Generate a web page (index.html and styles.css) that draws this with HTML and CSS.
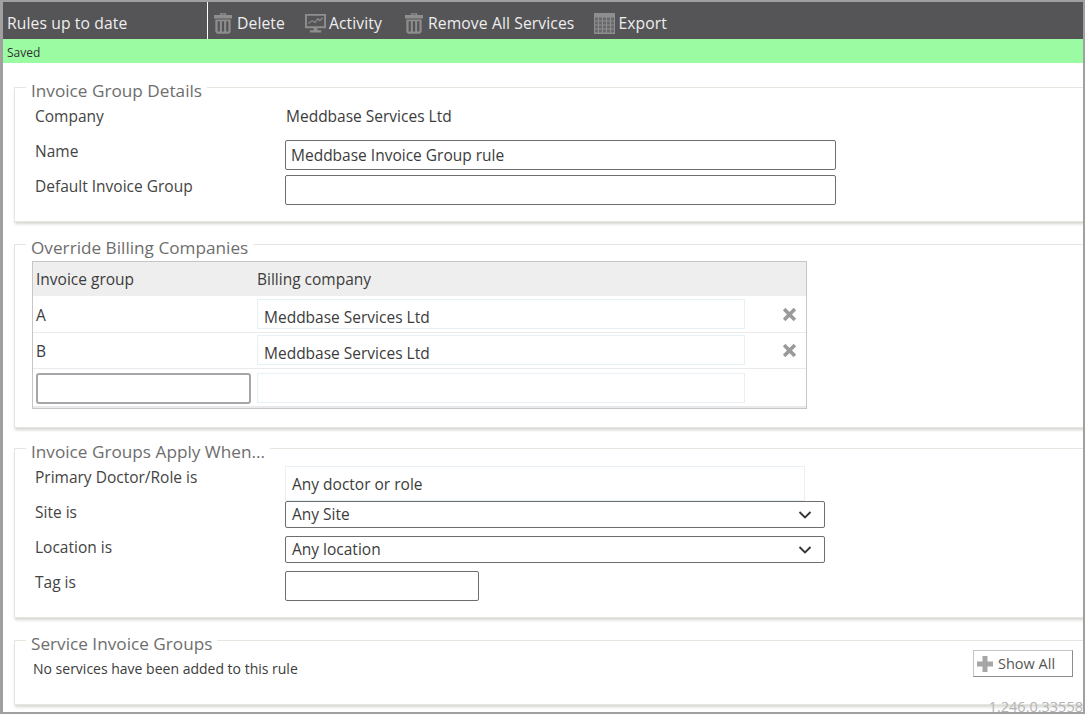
FILE: index.html
```html
<!DOCTYPE html>
<html lang="en">
<head>
<meta charset="utf-8">
<title>Invoice Group rule</title>
<link rel="stylesheet" href="styles.css">
</head>
<body>
<div class="frame">
  <div class="toolbar">
    <div class="status">Rules up to date</div>
    <div class="tool first">
      <svg class="icon" viewBox="0 0 20 23"><path class="solid" fill-rule="evenodd" d="M6.500 0h7v2H20v4H0V2h6.500zM8 1.500V2h4v-.5z"/><path class="solid" fill-rule="evenodd" d="M1.500 7h17v14l-2 2h-13l-2-2zM4 9v11.500h2.500V9zM8.750 9v11.500h2.500V9zM13.500 9v11.500H16V9z"/></svg>
      <span>Delete</span>
    </div>
    <div class="tool activity">
      <svg class="icon wide" viewBox="0 0 22 22"><path class="solid" fill-rule="evenodd" d="M0 1h22v15H13v2h4v2.500H5V18h4v-2H0zM2 3v11h18V3z"/><path class="line" d="M3.500 11l4-3 3 2 3-4 2 2 3-3"/></svg>
      <span>Activity</span>
    </div>
    <div class="tool remove-all">
      <svg class="icon" viewBox="0 0 20 23"><path class="solid" fill-rule="evenodd" d="M6.500 0h7v2H20v4H0V2h6.500zM8 1.500V2h4v-.5z"/><path class="solid" fill-rule="evenodd" d="M1.500 7h17v14l-2 2h-13l-2-2zM4 9v11.500h2.500V9zM8.750 9v11.500h2.500V9zM13.500 9v11.500H16V9z"/></svg>
      <span>Remove All Services</span>
    </div>
    <div class="tool export">
      <svg class="icon wide" viewBox="0 0 21 21"><rect class="solid" width="21" height="21"/><path class="gridcells" d="M0 6h21M0 10h21M0 14h21M0 18h21"/></svg>
      <span>Export</span>
    </div>
  </div>
  <div class="saved">Saved</div>

  <main class="content">
    <fieldset class="group details">
      <legend>Invoice Group Details</legend>
      <div class="form-row company"><label>Company</label><div class="value">Meddbase Services Ltd</div></div>
      <div class="form-row"><label>Name</label><input class="field long" type="text" value="Meddbase Invoice Group rule"></div>
      <div class="form-row"><label>Default Invoice Group</label><input class="field long" type="text"></div>
    </fieldset>

    <fieldset class="group override">
      <legend>Override Billing Companies</legend>
      <div class="table">
        <div class="t-row head"><div class="c-group">Invoice group</div><div class="c-bill">Billing company</div></div>
        <div class="t-row row-a">
          <div class="c-group cell-text">A</div>
          <div class="c-bill"><div class="lookup">Meddbase Services Ltd</div></div>
          <svg class="remove" viewBox="0 0 12 12"><path d="M1 1l10 10M11 1L1 11"/></svg>
        </div>
        <div class="t-row row-b">
          <div class="c-group cell-text">B</div>
          <div class="c-bill"><div class="lookup">Meddbase Services Ltd</div></div>
          <svg class="remove" viewBox="0 0 12 12"><path d="M1 1l10 10M11 1L1 11"/></svg>
        </div>
        <div class="t-row last">
          <div class="c-group"><input class="new-group" type="text"></div>
          <div class="c-bill"><div class="lookup empty"></div></div>
        </div>
      </div>
    </fieldset>

    <fieldset class="group apply">
      <legend>Invoice Groups Apply When...</legend>
      <div class="form-row tight"><label>Primary Doctor/Role is</label><div class="lookup doctor">Any doctor or role</div></div>
      <div class="form-row select-row"><label>Site is</label>
        <div class="select"><span>Any Site</span><svg viewBox="0 0 14 8"><path d="M1.500 1l5.500 5.500L12.500 1"/></svg></div>
      </div>
      <div class="form-row select-row"><label>Location is</label>
        <div class="select"><span>Any location</span><svg viewBox="0 0 14 8"><path d="M1.500 1l5.500 5.500L12.500 1"/></svg></div>
      </div>
      <div class="form-row tag-row"><label>Tag is</label><input class="field short" type="text"></div>
    </fieldset>

    <fieldset class="group services">
      <legend>Service Invoice Groups</legend>
      <div class="services-body">
        <p>No services have been added to this rule</p>
        <button class="show-all" type="button">
          <svg viewBox="0 0 16 16"><path d="M5.500 0h5v5.500H16v5h-5.500V16h-5v-5.500H0v-5h5.500z"/></svg>
          <span>Show All</span>
        </button>
      </div>
    </fieldset>
  </main>
  <div class="version">1.246.0.33558</div>
</div>
</body>
</html>
```
FILE: styles.css
```css
* { box-sizing: border-box; }
html, body { margin: 0; height: 100%; }
body {
  font-family: "Open Sans", "Noto Sans", sans-serif;
  font-size: 15.500px;
  color: #3c3c3c;
  background: #fff;
  overflow: hidden;
}
.frame {
  position: relative;
  display: flex;
  flex-direction: column;
  width: 1085px;
  height: 714px;
  border: solid #a0a0a0;
  border-width: 2px 2px 2px 3px;
}
.toolbar {
  display: flex;
  flex: none;
  align-items: stretch;
  height: 37px;
  background: #555557;
  color: #eee;
  font-size: 15.700px;
  font-weight: 500;
  letter-spacing: .1px;
}
.status {
  width: 205px;
  padding-left: 4px;
  line-height: 43px;
  border-right: 1px solid #fff;
}
.tool {
  display: flex;
  align-items: center;
  gap: 5px;
  padding-top: 5px;
  margin-left: 21px;
}
.tool.first { margin-left: 6px; }
.tool.activity { margin-left: 20px; }
.tool.remove-all { margin-left: 23px; }
.tool.export { margin-left: 20px; }
.icon { width: 18px; height: 21px; flex: none; }
.icon.wide { width: 21px; margin-right: -2px; }
.solid { fill: #8e8e8e; }
.line { fill: none; stroke: #8e8e8e; stroke-width: 1.200; }
.gridcells { fill: none; stroke: #69696b; stroke-width: 3; stroke-dasharray: 3 1; stroke-dashoffset: -5; }
.saved {
  flex: none;
  height: 24px;
  padding-left: 4px;
  background: #9bfba3;
  color: #333;
  font-size: 12px;
  line-height: 27px;
}
.content {
  flex: 1;
  min-height: 0;
  overflow: hidden;
  padding: 11px 0 0 11px;
}
.group {
  margin: 0 -20px 0 0;
  padding: 0 0 0 17px;
  border: 1px solid #e6e6e0;
  border-right: 0;
  box-shadow: 0 3px 3px -1px #d4d4d0;
}
.group legend {
  margin-left: -6px;
  padding: 6px 5px 0 5px;
  font-size: 17.200px;
  line-height: 21px;
  color: #6e6e6e;
}
.details { height: 148px; margin-bottom: 9px; }
.override { height: 197px; margin-bottom: 7px; }
.apply { height: 183px; margin-bottom: 9px; }
.services { height: 78px; }
.form-row {
  display: flex;
  align-items: flex-start;
  margin-bottom: 5px;
}
.form-row label {
  width: 253px;
  flex: none;
  padding-left: 3px;
  margin-top: 1px;
  line-height: 20px;
  color: #444;
}
.details .company label { margin-top: 0; }
.company { margin: 5px 0 14px; }
.value { line-height: 20px; padding-left: 1px; }
.field {
  display: block;
  height: 30px;
  padding: 0 5px;
  border: 1px solid #6e6e6e;
  border-radius: 2px;
  background: #fff;
  font: inherit;
  color: #3c3c3c;
}
.long { width: 551px; }
.short { width: 194px; }
.table {
  width: 775px;
  margin: 3px 0 0 0;
  border: 1px solid #c6c6c6;
}
.t-row {
  position: relative;
  display: flex;
  align-items: flex-start;
  height: 36px;
  border-bottom: 1px solid #eaeaea;
}
.t-row.row-a { height: 37px; }
.t-row.last { height: 39px; border-bottom: 2px solid #eaeaea; }
.t-row.head { height: 34px; background: #eeeeee; align-items: center; border-bottom: 0; }
.c-group { width: 224px; flex: none; padding-left: 3px; }
.c-bill { width: 488px; flex: none; }
.cell-text { line-height: 36px; margin-top: 1px; }
.row-b .cell-text { margin-top: 0; }
.lookup {
  height: 30px;
  margin-top: 3px;
  padding: 7px 6px 0;
  border: 1px solid #e6f0f5;
  line-height: 20px;
  color: #3c3c3c;
}
.row-b .lookup { margin-top: 2px; }
.last .lookup { margin-top: 4px; }
.remove {
  position: absolute;
  top: 12px;
  left: 750px;
  width: 13px;
  height: 13px;
  fill: none;
  stroke: #9a9a9a;
  stroke-width: 3.400;
}
.row-b .remove { top: 11px; }
.new-group {
  display: block;
  width: 215px;
  height: 31px;
  margin: 4px 0 0 0;
  border: 2px solid #a6a6aa;
  border-radius: 3px;
  background: #fff;
}
.doctor { width: 520px; height: 35px; margin-top: 4px; padding-top: 7px; }
.tight { margin-bottom: 0; }
.form-row.tight label { margin-top: 5px; }
.select {
  display: flex;
  align-items: center;
  justify-content: space-between;
  width: 540px;
  height: 27px;
  padding: 0 12px 2px 6px;
  border: 1px solid #6e6e6e;
  border-radius: 2px;
}
.select svg { width: 14px; height: 8px; margin-top: 2px; fill: none; stroke: #333; stroke-width: 1.800; }
.select-row { margin-bottom: 8px; }
.services-body {
  display: flex;
  justify-content: space-between;
  align-items: flex-start;
  margin-top: -3px;
  padding-right: 10px;
  margin-right: 20px;
}
.services-body p {
  margin: 9px 0 0 1px;
  font-size: 14px;
  line-height: 18px;
  color: #3c3c3c;
}
.show-all {
  display: flex;
  align-items: center;
  gap: 5px;
  width: 100px;
  height: 27px;
  margin-top: -1px;
  padding: 0 3px;
  border: 1px solid #c4c4c4;
  border-right-color: #8c8c8c;
  border-bottom-color: #8c8c8c;
  background: #fff;
  font: inherit;
  font-size: 14.500px;
  color: #555;
}
.show-all svg { width: 16px; height: 16px; fill: #a6a6a6; flex: none; }
.version {
  position: absolute;
  right: 0;
  bottom: -2px;
  font-size: 14.500px;
  line-height: 14px;
  color: #b4b4b4;
}
```
